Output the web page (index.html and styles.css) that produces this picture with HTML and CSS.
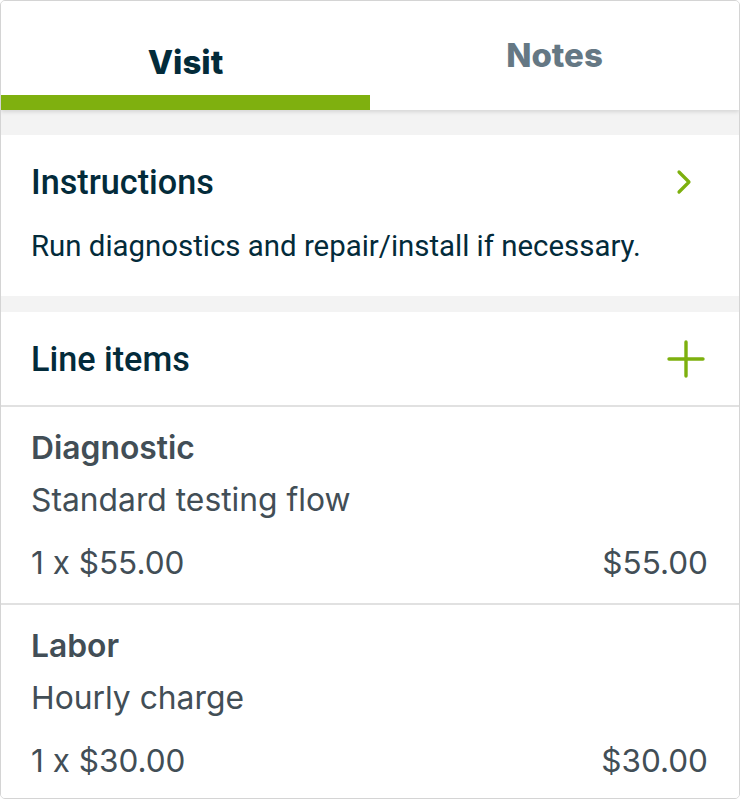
FILE: index.html
```html
<!DOCTYPE html>
<html>
<head>
<meta charset="utf-8">
<link rel="stylesheet" href="styles.css">
</head>
<body>
<div class="card">
  <div class="tabs">
    <div class="tab tab-active"><span>Visit</span></div>
    <div class="tab"><span>Notes</span></div>
  </div>
  <div class="gap gap-top"></div>
  <section class="instructions">
    <div class="sec-head">
      <h2 class="heading">Instructions</h2>
      <svg class="chev" width="20" height="28" viewBox="0 0 20 28"><path d="M4 4 L14 14 L4 24" fill="none" stroke="#7db00e" stroke-width="3.2" stroke-linecap="round" stroke-linejoin="round"/></svg>
    </div>
    <p class="instr-text">Run diagnostics and repair/install if necessary.</p>
  </section>
  <div class="gap gap-mid"></div>
  <section class="lines">
    <div class="lines-head">
      <h2 class="heading">Line items</h2>
      <svg class="plus" width="38" height="38" viewBox="0 0 38 38"><path d="M19 2 V36 M2 19 H36" fill="none" stroke="#7db00e" stroke-width="3.4" stroke-linecap="round"/></svg>
    </div>
    <div class="item">
      <div class="item-title">Diagnostic</div>
      <div class="item-desc">Standard testing flow</div>
      <div class="item-row"><span>1 x $55.00</span><span>$55.00</span></div>
    </div>
    <div class="item">
      <div class="item-title">Labor</div>
      <div class="item-desc">Hourly charge</div>
      <div class="item-row"><span>1 x $30.00</span><span>$30.00</span></div>
    </div>
  </section>
</div>
</body>
</html>
```
FILE: styles.css
```css
html, body { margin: 0; padding: 0; background: #ffffff; }
.card {
  width: 740px;
  height: 799px;
  box-sizing: border-box;
  border: 1px solid #d4d4d4;
  border-radius: 5px;
  overflow: hidden;
  background: #f3f3f3;
  display: flex;
  flex-direction: column;
}
.tabs {
  display: flex;
  height: 109px;
  background: #ffffff;
  box-shadow: 0 2px 4px rgba(0,0,0,0.12);
  position: relative;
  z-index: 1;
  flex: none;
}
.tab {
  flex: 1;
  display: flex;
  justify-content: center;
  font-family: Inter, "Noto Sans", sans-serif;
  font-weight: 800;
  font-size: 33px;
  color: #657884;
  padding-top: 34px;
  box-sizing: border-box;
  line-height: 40px;
}
.tab-active {
  color: #032b3a;
  padding-top: 41px;
  border-bottom: 15px solid #7fb00f;
}
.gap { flex: none; }
.gap-top { height: 25px; }
.gap-mid { height: 16px; }
.instructions {
  background: #ffffff;
  height: 161px;
  flex: none;
  padding: 0 32px 0 30px;
  box-sizing: border-box;
}
.sec-head {
  display: flex;
  justify-content: space-between;
  align-items: center;
  height: 93px;
  padding-top: 1px;
  box-sizing: border-box;
}
.heading {
  margin: 0;
  font-family: Roboto, "Noto Sans", sans-serif;
  font-weight: 500;
  font-size: 34.2px;
  color: #032b3a;
}
.chev { margin-right: 12px; }
.instr-text {
  margin: 0;
  font-family: Roboto, "Noto Sans", sans-serif;
  font-size: 29.4px;
  color: #032b3a;
  line-height: 36px;
}
.lines {
  background: #ffffff;
  flex: 1;
}
.lines-head {
  display: flex;
  justify-content: space-between;
  align-items: center;
  height: 93px;
  padding: 0 34px 0 30px;
  border-bottom: 2px solid #e1e1e1;
}
.item {
  padding: 0 31px 0 30px;
  height: 196px;
  border-bottom: 2px solid #e1e1e1;
  font-family: Inter, "Noto Sans", sans-serif;
  color: #424e56;
}
.item-title {
  font-weight: 600;
  font-size: 31.8px;
  padding-top: 24px;
  line-height: 34px;
}
.item-desc {
  font-size: 31.8px;
  line-height: 34px;
  margin-top: 18px;
}
.item-row {
  display: flex;
  justify-content: space-between;
  font-size: 31.5px;
  line-height: 36px;
  margin-top: 28px;
}
```
